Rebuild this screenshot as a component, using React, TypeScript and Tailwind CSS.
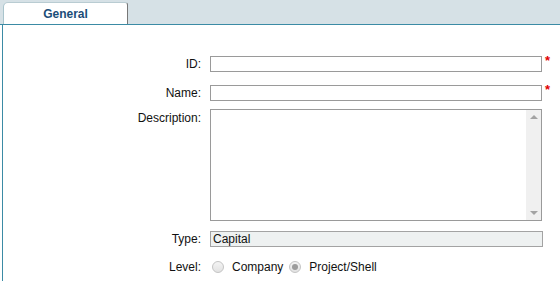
import React from 'react'

function Radio({ checked }: { checked?: boolean }) {
  return (
    <span className="flex h-[12px] w-[12px] items-center justify-center rounded-full border border-[#c4c4c4] bg-gradient-to-b from-[#f4f4f4] to-[#e2e2e2]">
      {checked && <span className="h-[6px] w-[6px] rounded-full bg-[#9c9c9c]" />}
    </span>
  )
}

function Label({ children, top }: { children: React.ReactNode; top?: boolean }) {
  return (
    <div className={`w-[199px] shrink-0 pr-[1px] text-right ${top ? 'self-start pt-[1px]' : ''}`}>
      {children}
    </div>
  )
}

export default function App() {
  return (
    <div className="h-[281px] w-[560px] overflow-hidden bg-white font-['Liberation_Sans',Arial,sans-serif] text-[12px] leading-[16px] text-[#111]">
      {/* tab strip */}
      <div className="flex h-[25px] items-end border-b border-[#3b8ba5] bg-[#d6e1e6] pl-[3px]">
        <div className="flex h-[22px] w-[125px] items-center justify-center rounded-tl-[5px] rounded-tr-[3px] border border-b-0 border-l-[#a9c4cc] border-r-[#777] border-t-[#b9ccd2] bg-white font-bold text-[#1b4d78]">
          General
        </div>
      </div>

      {/* form body */}
      <div className="ml-[2px] flex h-[256px] flex-col border-l border-[#3b8ba5] pt-[31px]">
        <div className="flex items-center">
          <Label>ID:</Label>
          <div className="ml-[8px] h-[16px] w-[332px] border border-[#9a9a9a] bg-white" />
          <span className="ml-[3px] self-start text-[13px] leading-[10px] font-bold text-[#e00000]">*</span>
        </div>

        <div className="mt-[13px] flex items-center">
          <Label>Name:</Label>
          <div className="ml-[8px] h-[16px] w-[332px] border border-[#9a9a9a] bg-white" />
          <span className="ml-[3px] self-start text-[13px] leading-[10px] font-bold text-[#e00000]">*</span>
        </div>

        <div className="mt-[8px] flex">
          <Label top>Description:</Label>
          <div className="ml-[8px] flex h-[112px] w-[332px] border border-[#9a9a9a] bg-white">
            <div className="flex-1" />
            <div className="flex w-[15px] flex-col items-center justify-between bg-[#f0f0f0] py-[5px]">
              <span className="h-0 w-0 border-x-[4px] border-b-[4px] border-x-transparent border-b-[#a3a3a3]" />
              <span className="h-0 w-0 border-x-[4px] border-t-[4px] border-x-transparent border-t-[#a3a3a3]" />
            </div>
          </div>
        </div>

        <div className="mt-[10px] flex items-center">
          <Label>Type:</Label>
          <div className="ml-[8px] flex h-[16px] w-[333px] items-center border border-[#a3a3a3] bg-[#eef1f1] pl-[2px]">
            Capital
          </div>
        </div>

        <div className="mt-[12px] flex items-center">
          <Label>Level:</Label>
          <div className="ml-[10px] flex items-center">
            <Radio />
            <span className="ml-[8px]">Company</span>
            <span className="ml-[6px]">
              <Radio checked />
            </span>
            <span className="ml-[8px]">Project/Shell</span>
          </div>
        </div>
      </div>
    </div>
  )
}
